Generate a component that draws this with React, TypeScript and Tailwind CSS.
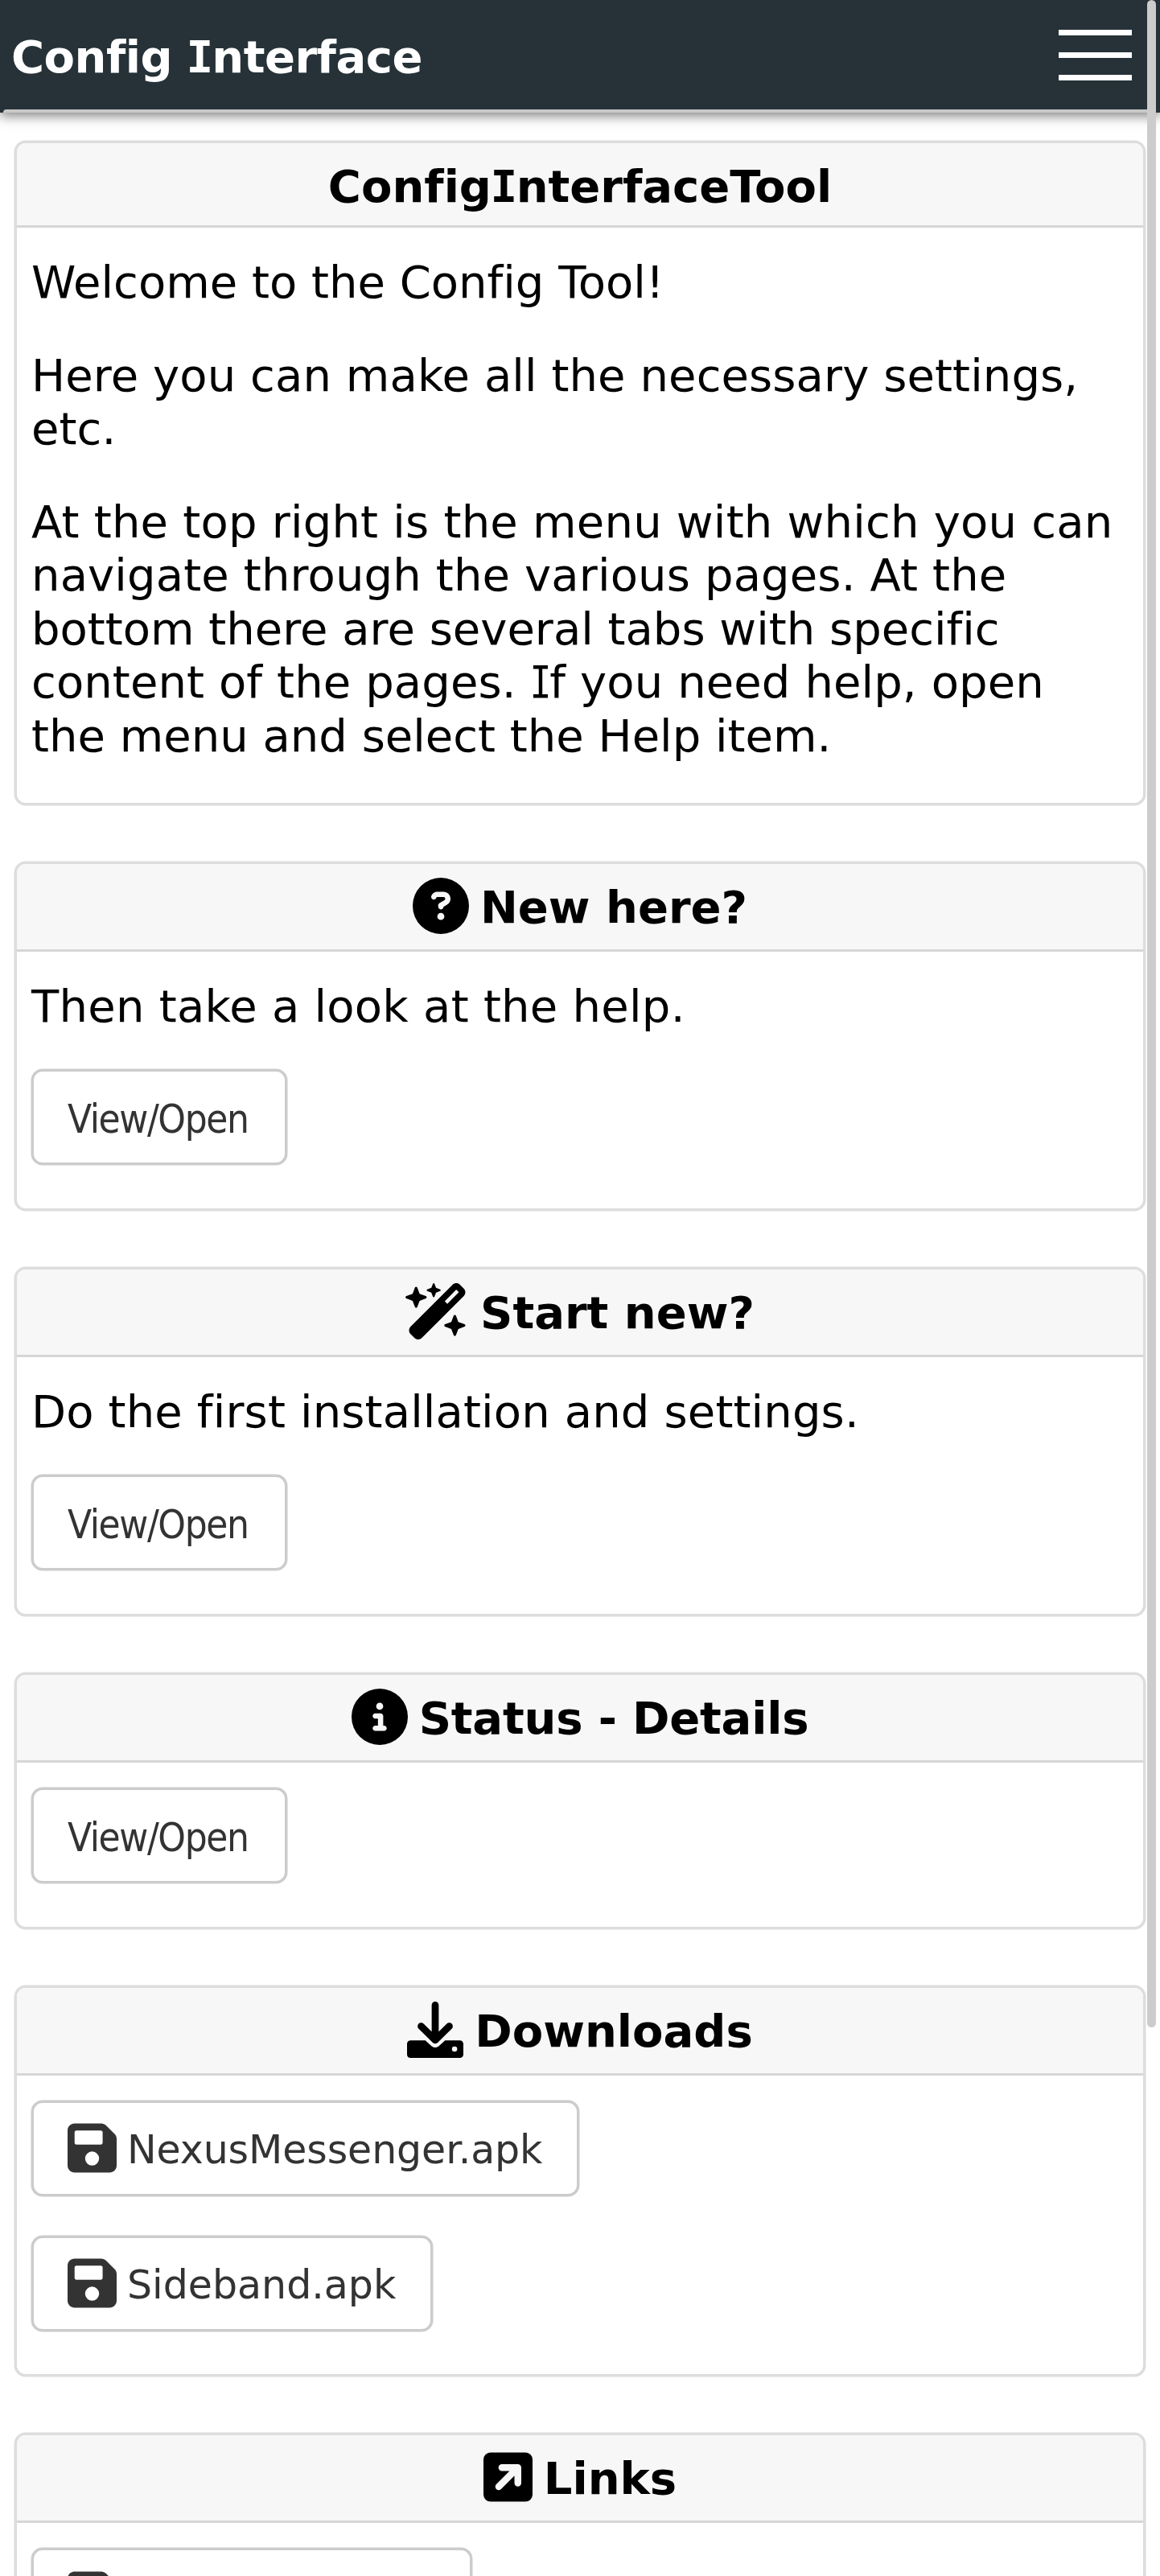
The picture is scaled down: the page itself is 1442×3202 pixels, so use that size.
import type { ReactNode } from "react";
import { FaCircleInfo, FaCircleQuestion, FaWandMagicSparkles } from "react-icons/fa6";

function FloppyIcon() {
  return (
    <svg viewBox="0 0 448 512" className="h-[70px] w-[61px] shrink-0" fill="currentColor">
      <path
        fillRule="evenodd"
        d="M64 32C28.7 32 0 60.7 0 96V416c0 35.3 28.7 64 64 64H384c35.3 0 64-28.7 64-64V173.3c0-17-6.7-33.3-18.7-45.3L352 50.7C340 38.7 323.7 32 306.7 32H64zM80 96H304c8.800 0 16 7.200 16 16V208c0 8.800-7.200 16-16 16H80c-8.800 0-16-7.200-16-16V112c0-8.800 7.200-16 16-16zM224 288a64 64 0 1 1 0 128 64 64 0 1 1 0-128z"
      />
    </svg>
  );
}

function DownloadIcon() {
  return (
    <svg viewBox="0 0 512 512" className="size-[70px] shrink-0" fill="currentColor">
      <path d="M256 32V330M128 224L256 350L384 224" fill="none" stroke="currentColor" strokeWidth="64" strokeLinecap="round" strokeLinejoin="round" />
      <path
        fillRule="evenodd"
        d="M32 352H166L222 404C242 421 270 421 290 404L346 352H480C498 352 512 366 512 384V480C512 498 498 512 480 512H32C14 512 0 498 0 480V384C0 366 14 352 32 352zM432 408a24 24 0 1 0 0 48 24 24 0 1 0 0-48z"
      />
    </svg>
  );
}

function LinkIcon() {
  return (
    <svg viewBox="0 0 448 512" className="h-[70px] w-[61px] shrink-0" fill="none">
      <rect x="0" y="32" width="448" height="448" rx="64" fill="currentColor" />
      <path
        d="M168 169H314V312M310 173L139 344"
        stroke="#f7f7f7"
        strokeWidth="62"
        strokeLinecap="round"
        strokeLinejoin="round"
      />
    </svg>
  );
}

function BoldI() {
  return <span className="mx-[-1.5px] font-['DejaVu_Sans_Mono',monospace]">I</span>;
}

function SerifI() {
  return (
    <span className="mx-[-5px] inline-block scale-x-[0.8] font-['DejaVu_Sans_Mono',monospace]">I</span>
  );
}

function Card({
  title,
  icon,
  className,
  children,
}: {
  title: ReactNode;
  icon?: ReactNode;
  className: string;
  children: ReactNode;
}) {
  return (
    <section
      className={`ml-[18px] w-[1406px] shrink-0 overflow-hidden rounded-[14px] border-[3px] border-[#dddddd] bg-white shadow-[0_0_0_0.5px_#dddddd] ${className}`}
    >
      <h2
        className={`flex justify-center gap-[14px] border-b-[3px] border-[#d6d6d6] bg-[#f7f7f7] text-[56px] leading-[66px] font-bold text-black ${
          icon ? "h-[109px] pt-[17px]" : "h-[105px] pt-[21px]"
        }`}
      >
        {icon}
        <span className={icon ? "pt-[4px]" : ""}>{title}</span>
      </h2>
      <div className="pl-[18px]">{children}</div>
    </section>
  );
}

function ViewButton() {
  return (
    <button className="flex h-[119px] w-[318px] items-center rounded-[14px] border-[3px] border-[#cccccc] bg-white pt-[7px] pl-[42px] font-['DejaVu_Sans_Condensed','DejaVu_Sans',sans-serif] text-[49px] tracking-[-1.4px] whitespace-nowrap text-[#333333] shadow-[0_0_0_0.5px_#cccccc]">
      View/Open
    </button>
  );
}

function FileButton({ label, className }: { label: string; className: string }) {
  return (
    <button
      className={`flex h-[119px] items-center gap-[13px] rounded-[14px] border-[3px] border-[#cccccc] bg-white pl-[42px] text-[49px] whitespace-nowrap text-[#333333] shadow-[0_0_0_0.5px_#cccccc] ${className}`}
    >
      <FloppyIcon />
      <span className="pt-[6px]">{label}</span>
    </button>
  );
}

export default function App() {
  return (
    <div className="relative flex h-[3202px] w-[1442px] flex-col overflow-hidden bg-white font-['DejaVu_Sans',sans-serif] text-[56px] leading-[66.5px] text-black [font-variant-ligatures:none]">
      <header className="relative flex h-[140px] shrink-0 items-start justify-between bg-[#263238] pl-[14px] shadow-[0_4px_14px_rgba(0,0,0,0.5)]">
        <h1 className="pt-[38px] leading-[66px] font-bold tracking-[-0.5px] text-white">
          Config <BoldI />
          nterface
        </h1>
        <div className="mt-[37px] mr-[35px] flex w-[91px] flex-col gap-[21px]">
          <span className="h-[7px] bg-white" />
          <span className="h-[7px] bg-white" />
          <span className="h-[7px] bg-white" />
        </div>
        <div className="absolute bottom-0 left-[4px] h-[4px] w-[1424px] rounded-tl-[10px] bg-[#c8c8c8]" />
      </header>

      <main className="flex flex-col gap-[70px] pt-[35px]">
        <Card
          title={
            <>
              Config
              <BoldI />
              nterfaceTool
            </>
          }
          className="h-[826px]"
        >
          <div className="flex w-[1380px] flex-col gap-[49px] pt-[35px] whitespace-nowrap">
            <p>Welcome to the Config Tool!</p>
            <p className="tracking-[0.09px]">
              Here you can make all the necessary settings,
              <br />
              etc.
            </p>
            <p>
              <span className="tracking-[0.21px]">At the top right is the menu with which you can</span>
              <br />
              <span className="tracking-[0.14px]">navigate through the various pages. At the</span>
              <br />
              bottom there are several tabs with specific
              <br />
              <span className="tracking-[0.1px]">
                content of the pages. <SerifI />f you need help, open
              </span>
              <br />
              the menu and select the Help item.
            </p>
          </div>
        </Card>

        <Card
          title="New here?"
          icon={<FaCircleQuestion className="size-[70px] shrink-0" />}
          className="h-[434px]"
        >
          <p className="pt-[35px] pb-[44.5px] tracking-[0.25px]">Then take a look at the help.</p>
          <ViewButton />
        </Card>

        <Card
          title="Start new?"
          icon={<FaWandMagicSparkles className="h-[70px] w-[79px] shrink-0" />}
          className="h-[434px]"
        >
          <p className="pt-[35px] pb-[44.5px] tracking-[0.14px]">Do the first installation and settings.</p>
          <ViewButton />
        </Card>

        <Card
          title={<span className="tracking-[-0.2px]">Status - Details</span>}
          icon={<FaCircleInfo className="size-[70px] shrink-0" />}
          className="h-[318.5px]"
        >
          <div className="pt-[31px]">
            <ViewButton />
          </div>
        </Card>

        <Card title="Downloads" icon={<DownloadIcon />} className="h-[486.5px]">
          <div className="flex flex-col gap-[49px] pt-[31px]">
            <FileButton label="NexusMessenger.apk" className="w-[681px] tracking-[-0.1px]" />
            <FileButton label="Sideband.apk" className="w-[499px]" />
          </div>
        </Card>

        <Card title="Links" icon={<LinkIcon />} className="h-[318px]">
          <div className="pt-[31px]">
            <FileButton label="" className="w-[548px]" />
          </div>
        </Card>
      </main>

      <div className="absolute top-0 left-[1426px] h-[2520px] w-[11px] rounded-full bg-[#cccccc]" />
    </div>
  );
}
